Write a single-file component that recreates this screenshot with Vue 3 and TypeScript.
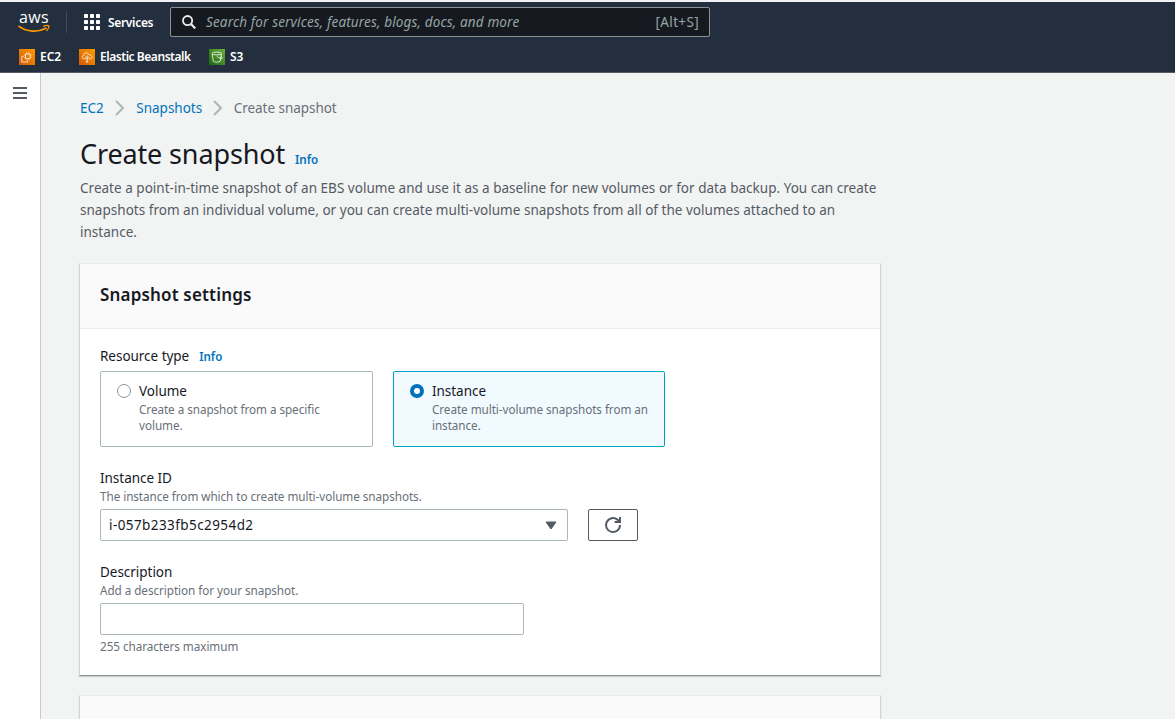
<script setup lang="ts">
import { ref } from 'vue'

type ResourceType = 'volume' | 'instance'

interface Option {
  id: ResourceType
  label: string
  lines: string[]
}

const options: Option[] = [
  { id: 'volume', label: 'Volume', lines: ['Create a snapshot from a specific', 'volume.'] },
  { id: 'instance', label: 'Instance', lines: ['Create multi-volume snapshots from an', 'instance.'] },
]

const intro: string[] = [
  'Create a point-in-time snapshot of an EBS volume and use it as a baseline for new volumes or for data backup. You can create',
  'snapshots from an individual volume, or you can create multi-volume snapshots from all of the volumes attached to an',
  'instance.',
]

const selected = ref<ResourceType>('instance')
const instanceId = ref('i-057b233fb5c2954d2')
const description = ref('')
</script>

<template>
  <div class="page">
    <header class="topnav">
      <div class="bar">
        <div class="aws">
          <span class="aws-text">aws</span>
          <svg class="smile" width="34" height="10" viewBox="0 0 34 10">
            <path d="M1 2.4 C9 8.2 20 8.4 28 4.2" fill="none" stroke="#f90" stroke-width="1.7" stroke-linecap="round" />
            <path d="M25.6 2.2 C28 1.3 30.2 1.4 30.9 2 C31.2 3.4 30.4 5.2 28.9 6.6" fill="none" stroke="#f90" stroke-width="1.3" stroke-linecap="round" />
          </svg>
        </div>
        <span class="divider"></span>
        <svg class="grid-icon" width="16" height="16" viewBox="0 0 16 16" fill="#fff">
          <template v-for="r in 3" :key="r">
            <rect v-for="c in 3" :key="c" :x="(c - 1) * 6" :y="(r - 1) * 6" width="4" height="4" rx="0.7" />
          </template>
        </svg>
        <span class="services">Services</span>
        <div class="search">
          <svg width="14" height="14" viewBox="0 0 14 14" fill="none" stroke="#eaeded" stroke-width="1.8">
            <circle cx="5.6" cy="5.6" r="4.6" />
            <path d="M9 9 L13.2 13.4" stroke-width="2.2" />
          </svg>
          <span class="placeholder">Search for services, features, blogs, docs, and more</span>
          <span class="shortcut">[Alt+S]</span>
        </div>
      </div>
      <nav class="favorites">
        <a class="fav fav-ec2">
          <svg width="16" height="16" viewBox="0 0 16 16" fill="none" stroke="#fff" stroke-width="0.75">
            <defs>
              <linearGradient id="orange" x1="0" y1="1" x2="1" y2="0"><stop offset="0" stop-color="#d45b07" /><stop offset="1" stop-color="#f90" /></linearGradient>
            </defs>
            <rect width="16" height="16" fill="url(#orange)" stroke="none" />
            <path d="M6.5 5 h4.6 v4.6 h-4.6 z M4.5 7.4 H2.8 v5.6 h5.8 v-1.8" />
            <path d="M7.6 5 V3.4 M9.9 5 V3.4 M11.1 6.1 H12.8 M11.1 8.4 H12.8 M6.5 8.4 H4.9 M7.6 9.6 v1.5 M9.9 9.6 v1.5 M6.5 6.1 H4.9" stroke-width="0.55" />
          </svg>
          <span>EC2</span>
        </a>
        <a class="fav fav-eb">
          <svg width="16" height="16" viewBox="0 0 16 16" fill="none" stroke="#fff" stroke-width="0.8">
            <rect width="16" height="16" fill="url(#orange)" stroke="none" />
            <path d="M6.6 9.8 H4.9 C2.6 9.6 2.6 6.9 4.6 6.6 C4.6 3.4 8.7 2.8 9.5 5.5 C10.9 4.8 11.6 5.7 11.6 6.7 C13.7 7 13.4 9.6 11.6 9.8 H9.6" />
            <path d="M8.1 6.5 V13 M8.1 9.6 L6.2 7.8 M8.1 9.6 L10 7.8 M6.9 13 h2.4" />
          </svg>
          <span class="eb-text">Elastic Beanstalk</span>
        </a>
        <a class="fav fav-s3">
          <svg width="16" height="16" viewBox="0 0 16 16" fill="none" stroke="#fff" stroke-width="0.8">
            <defs>
              <linearGradient id="green" x1="0" y1="1" x2="1" y2="0"><stop offset="0" stop-color="#1b660f" /><stop offset="1" stop-color="#6cae3e" /></linearGradient>
            </defs>
            <rect width="16" height="16" fill="url(#green)" stroke="none" />
            <ellipse cx="7.8" cy="4.5" rx="4.7" ry="1.4" />
            <path d="M3.1 4.6 L4.3 12.2 C5.3 13.5 10.2 13.5 11.2 12.2 L12.5 4.6 M7.8 7.5 C10 9 12.5 9.8 13.2 9.2 C13.4 8.7 12.8 8.1 12 7.8" />
          </svg>
          <span>S3</span>
        </a>
      </nav>
    </header>

    <div class="body">
      <aside class="rail">
        <span class="burger"><i></i><i></i><i></i></span>
      </aside>
      <main class="content">
        <nav class="crumbs">
          <a>EC2</a>
          <svg width="9" height="16" viewBox="0 0 9 16" fill="none" stroke="#aab7b8" stroke-width="2"><path d="M1 1 L8 8 L1 15" /></svg>
          <a>Snapshots</a>
          <svg width="9" height="16" viewBox="0 0 9 16" fill="none" stroke="#aab7b8" stroke-width="2"><path d="M1 1 L8 8 L1 15" /></svg>
          <span class="current">Create snapshot</span>
        </nav>
        <div class="title">
          <h1>Create snapshot</h1>
          <a class="info">Info</a>
        </div>
        <p class="intro">
          <span v-for="(line, i) in intro" :key="i">{{ line }}</span>
        </p>

        <section class="card">
          <div class="card-head"><h2>Snapshot settings</h2></div>
          <div class="card-body">
            <div class="label-row">
              <span class="label">Resource type</span>
              <a class="info">Info</a>
            </div>
            <div class="tiles">
              <div
                v-for="o in options"
                :key="o.id"
                class="tile"
                :class="[o.id, { active: selected === o.id }]"
                @click="selected = o.id"
              >
                <span class="radio"></span>
                <div class="tile-text">
                  <span class="label">{{ o.label }}</span>
                  <span v-for="line in o.lines" :key="line" class="hint">{{ line }}</span>
                </div>
              </div>
            </div>

            <div class="field">
              <span class="label">Instance ID</span>
              <span class="hint">The instance from which to create multi-volume snapshots.</span>
              <div class="select-row">
                <div class="select">
                  <span class="value">{{ instanceId }}</span>
                  <svg width="12" height="9" viewBox="0 0 12 9"><path d="M1 1 H11 L6 8 Z" fill="#545b64" stroke="#545b64" stroke-linejoin="round" /></svg>
                </div>
                <button class="refresh" aria-label="Refresh">
                  <svg width="18" height="18" viewBox="0 0 18 18" fill="none" stroke="#545b64" stroke-width="2">
                    <path d="M16 9 A7 7 0 1 1 13.4 3.6 L15.4 5.4" />
                    <path d="M16 1 V6 H10.6" />
                  </svg>
                </button>
              </div>
            </div>

            <div class="field">
              <span class="label">Description</span>
              <span class="hint">Add a description for your snapshot.</span>
              <input v-model="description" class="input" type="text" />
              <span class="hint">255 characters maximum</span>
            </div>
          </div>
        </section>

        <section class="card"><div class="card-head"></div></section>
      </main>
    </div>
  </div>
</template>

<style>
body {
  margin: 0;
  overflow: hidden;
}
</style>

<style scoped>
* {
  box-sizing: border-box;
}
.page {
  height: 719px;
  overflow: hidden;
  display: flex;
  flex-direction: column;
  background: #f2f3f3;
  color: #16191f;
  font-family: "Noto Sans", "Open Sans", sans-serif;
  font-size: 13.5px;
  white-space: nowrap;
}
.topnav {
  height: 73px;
  flex: none;
  border-top: 2px solid #f0f2f4;
  border-bottom: 1px solid #545b64;
  background: #232f3e;
  color: #fff;
}
.bar {
  display: flex;
  align-items: center;
  height: 40px;
  padding-left: 18px;
}
.aws {
  display: flex;
  flex-direction: column;
  flex: none;
  width: 34px;
  height: 28px;
}
.aws-text {
  height: 20px;
  padding-left: 1px;
  font-family: "Open Sans", sans-serif;
  font-size: 16px;
  font-weight: 500;
  line-height: 18px;
  letter-spacing: 0.3px;
}
.smile {
  flex: none;
  margin-top: -4px;
}
.divider {
  width: 1px;
  height: 22px;
  margin: 0 17px 0 14px;
  background: #414d5c;
}
.grid-icon {
  flex: none;
}
.services {
  width: 62px;
  margin-left: 8px;
  font-size: 12px;
  font-weight: 600;
  letter-spacing: -0.32px;
}
.search {
  display: flex;
  align-items: center;
  width: 540px;
  height: 30px;
  padding: 0 10px 0 11px;
  border: 1px solid #879596;
  border-radius: 2px;
  background: #16191f;
  color: #95a5a6;
}
.placeholder {
  flex: 1;
  margin-left: 10px;
  font-size: 13.5px;
  font-style: italic;
  letter-spacing: 0.15px;
}
.shortcut {
  font-size: 13.5px;
  letter-spacing: 0.35px;
}
.favorites {
  display: flex;
  height: 30px;
  padding-left: 19px;
  font-size: 12px;
  font-weight: 600;
}
.fav {
  display: flex;
  align-items: center;
  gap: 5px;
}
.fav span {
  margin-top: -1px;
}
.eb-text {
  letter-spacing: -0.45px;
}
.fav-ec2 {
  width: 60px;
}
.fav-eb {
  width: 130px;
}
.body {
  display: flex;
  flex: 1;
  min-height: 0;
}
.rail {
  width: 41px;
  flex: none;
  padding: 14px 13px;
  border-right: 1px solid #c6cbcc;
  background: #fff;
}
.burger {
  display: flex;
  flex-direction: column;
  gap: 3px;
}
.burger i {
  height: 2px;
  background: #545b64;
}
.content {
  width: 841px;
  padding: 24px 0 0 39px;
}
.crumbs {
  display: flex;
  align-items: center;
  height: 22px;
  color: #687078;
}
.crumbs svg {
  margin: 0 12px 0 11.5px;
}
.crumbs svg:nth-of-type(2) {
  margin: 0 11.5px 0 11px;
}
.crumbs .current {
  letter-spacing: -0.04px;
}
.crumbs a,
.info {
  color: #0073bb;
}
.title {
  display: flex;
  align-items: baseline;
  height: 36px;
  margin-top: 17px;
  line-height: 36px;
}
h1 {
  margin: 0 10px 0 0;
  font-size: 27px;
  font-weight: 400;
  letter-spacing: -0.14px;
}
.info {
  font-size: 11.6px;
  font-weight: 600;
}
.intro {
  display: flex;
  flex-direction: column;
  margin: 5px 0 20px;
  line-height: 22px;
  color: #545b64;
  letter-spacing: 0.023px;
}
.card {
  width: 802px;
  margin-left: -1px;
  height: 413px;
  margin-bottom: 19px;
  border: 1px solid #d0d4d5;
  border-top-color: #eaeded;
  border-bottom-color: #879196;
  background: #fff;
  box-shadow: 0 1px 1px rgba(0, 28, 36, 0.15);
}
.card-head {
  height: 65px;
  padding: 0 20px;
  border-bottom: 1px solid #eaeded;
  background: #fafafa;
}
h2 {
  margin: 0;
  padding-top: 19px;
  font-size: 17px;
  line-height: 24px;
  font-weight: 600;
  letter-spacing: 0.17px;
}
.card-body {
  padding: 16px 20px;
}
.label-row {
  display: flex;
  gap: 10px;
  align-items: center;
  height: 22px;
  margin-bottom: 4px;
}
.label {
  line-height: 22px;
  letter-spacing: -0.03px;
}
.hint {
  font-size: 11.7px;
  line-height: 16px;
  letter-spacing: -0.045px;
  color: #687078;
}
.tiles {
  display: flex;
  gap: 20px;
}
.tile {
  display: flex;
  width: 273px;
  height: 76px;
  padding: 8px 16px;
  border: 1px solid #aab7b8;
  border-radius: 2px;
}
.tile.instance {
  width: 272px;
}
.tile.active {
  border-color: #00a1c9;
  background: #f1faff;
}
.radio {
  width: 14px;
  height: 14px;
  margin: 4px 8px 0 0;
  border: 1px solid #879596;
  border-radius: 50%;
  background: #fff;
}
.active .radio {
  border: 4px solid #0073bb;
}
.tile-text,
.field {
  display: flex;
  flex-direction: column;
}
.tile-text .hint:nth-child(2) {
  margin-top: -1px;
}
.field {
  margin-top: 20px;
}
.field .label + .hint {
  margin: -1px 0 1px;
}
.select-row {
  display: flex;
  gap: 20px;
  margin-top: 4px;
}
.select {
  display: flex;
  align-items: center;
  justify-content: space-between;
  width: 468px;
  height: 32px;
  padding: 0 10px 0 8px;
  border: 1px solid #aab7b8;
  border-radius: 2px;
}
.value {
  letter-spacing: 0.42px;
}
.refresh {
  display: flex;
  align-items: center;
  justify-content: center;
  width: 50px;
  height: 32px;
  padding: 0;
  border: 1px solid #545b64;
  border-radius: 2px;
  background: #fff;
}
.input {
  width: 424px;
  height: 32px;
  margin: 4px 0 3px;
  border: 1px solid #aab7b8;
  border-radius: 2px;
  outline: none;
}
</style>
